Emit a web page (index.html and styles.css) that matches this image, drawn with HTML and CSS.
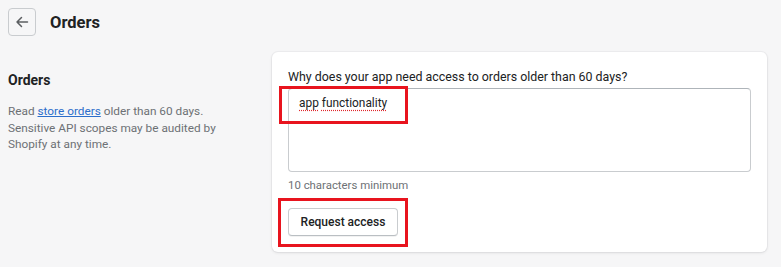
FILE: index.html
```html
<!DOCTYPE html>
<html lang="en">
<head>
<meta charset="utf-8">
<title>Orders</title>
<link rel="stylesheet" href="styles.css">
</head>
<body>
<div class="page">
  <header class="header">
    <button class="back" aria-label="Back">
      <svg width="14" height="14" viewBox="0 0 14 14" fill="none" stroke="#5c5f62" stroke-width="1.5" stroke-linecap="round" stroke-linejoin="round"><path d="M12.5 7H2M6.5 2.5 2 7l4.5 4.5"/></svg>
    </button>
    <h1 class="title">Orders</h1>
  </header>
  <div class="layout">
    <aside class="annotation">
      <h2 class="section-title">Orders</h2>
      <p class="desc">Read <a href="#" class="link">store orders</a> older than 60 days. Sensitive API scopes may be audited by Shopify at any time.</p>
    </aside>
    <section class="card">
      <label class="label">Why does your app need access to orders older than 60 days?</label>
      <div class="field"><span class="misspelled">app</span> <span class="misspelled">functionality</span></div>
      <div class="help">10 characters minimum</div>
      <button class="btn">Request access</button>
      <div class="mark mark-field"></div>
      <div class="mark mark-btn"></div>
    </section>
  </div>
</div>
</body>
</html>
```

FILE: styles.css
```css
* { box-sizing: border-box; }
html, body { margin: 0; padding: 0; }
body {
  background: #f6f6f7;
  font-family: Roboto, "Noto Sans", sans-serif;
  color: #202223;
  width: 781px;
  height: 267px;
  overflow: hidden;
}
.page { padding: 8px 14px 0 8px; }
.header {
  display: flex;
  align-items: center;
  gap: 14px;
  height: 28px;
}
.back {
  width: 28px;
  height: 28px;
  padding: 0;
  border: 1px solid #c9cccf;
  border-radius: 4px;
  background: #f6f6f7;
  display: flex;
  align-items: center;
  justify-content: center;
}
.title {
  margin: 0;
  font-size: 16.5px;
  font-weight: 700;
  line-height: 28px;
  padding-top: 1px;
}
.layout {
  display: flex;
  align-items: flex-start;
  margin-top: 16px;
  gap: 22px;
}
.annotation { width: 242px; padding-top: 18px; }
.section-title {
  margin: 0;
  font-size: 14px;
  font-weight: 700;
  line-height: 20px;
}
.desc {
  margin: 13px 0 0;
  max-width: 222px;
  font-size: 11.8px;
  line-height: 16.5px;
  color: #6d7175;
}
.link { color: #2c6ecb; text-decoration: underline; }
.card {
  position: relative;
  width: 495px;
  background: #fff;
  border-radius: 6px;
  box-shadow: 0 0 0 1px rgba(63,63,68,0.04), 0 1px 3px rgba(63,63,68,0.12);
  padding: 16px 16px 16px;
}
.label {
  display: block;
  font-size: 12.4px;
  line-height: 18px;
  margin-bottom: 2px;
}
.field {
  height: 84px;
  border: 1px solid #c9cccf;
  border-top-color: #aeb4b9;
  border-radius: 4px;
  padding: 4px 10px;
  font-size: 11.9px;
  line-height: 20px;
}
.misspelled {
  text-decoration: underline dotted #e0262b;
  text-underline-offset: 3px;
}
.help {
  margin-top: 4px;
  font-size: 11.4px;
  line-height: 18px;
  color: #6d7175;
}
.btn {
  margin-top: 14px;
  display: block;
  height: 28px;
  width: 110px;
  padding: 0;
  background: #fff;
  border: 1px solid #c9cccf;
  border-bottom-color: #babfc3;
  border-radius: 4px;
  box-shadow: 0 1px 0 rgba(0,0,0,0.05);
  font-family: inherit;
  font-size: 12px;
  font-weight: 500;
  color: #202223;
}
.mark {
  position: absolute;
  border: 3px solid #e8141e;
}
.mark-field { left: 7px; top: 34px; width: 129px; height: 38px; }
.mark-btn { left: 6px; top: 146px; width: 130px; height: 49px; }
```
